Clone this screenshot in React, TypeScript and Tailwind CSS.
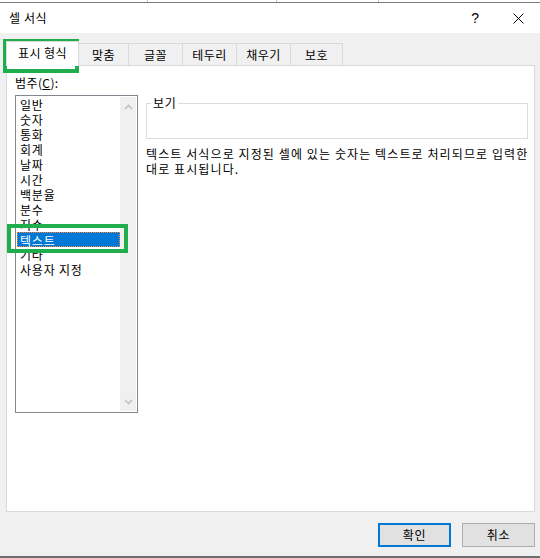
import React from "react";

const categories = [
  "일반",
  "숫자",
  "통화",
  "회계",
  "날짜",
  "시간",
  "백분율",
  "분수",
  "지수",
  "텍스트",
  "기타",
  "사용자 지정",
];

const tabs = ["맞춤", "글꼴", "테두리", "채우기", "보호"];

const Chevron = ({ up }: { up?: boolean }) => (
  <svg width="9" height="6" viewBox="0 0 9 6" className="block">
    <path
      d={up ? "M1 5 L4.5 1.5 L8 5" : "M1 1 L4.5 4.5 L8 1"}
      fill="none"
      stroke="#c2c2c2"
      strokeWidth="1.6"
    />
  </svg>
);

export default function App() {
  return (
    <div className="relative w-[540px] h-[558px] flex flex-col bg-[#f0f0f0] text-[12px] text-black font-['Noto_Sans_CJK_KR','Malgun_Gothic',sans-serif] overflow-hidden">
      {/* sheet behind the dialog */}
      <div className="h-[3px] bg-white border-b border-[#7a7a7a] flex">
        <div className="w-[148px] border-r border-[#c6c6c6]" />
        <div className="w-[129px] border-r border-[#c6c6c6]" />
        <div className="w-[102px] border-r border-[#c6c6c6]" />
      </div>

      {/* title bar */}
      <div className="h-[30px] bg-white flex items-center pl-[9px] pr-[16px]">
        <span className="text-[12px] leading-none tracking-[0.6px]">셀 서식</span>
        <span className="ml-auto text-[14px] leading-none font-['Liberation_Sans',sans-serif]">?</span>
        <svg width="11" height="11" viewBox="0 0 11 11" className="ml-[34px]">
          <path d="M0.5 0.5 L10.5 10.5 M10.5 0.5 L0.5 10.5" stroke="#000" strokeWidth="1" />
        </svg>
      </div>

      {/* body */}
      <div className="flex-1 flex flex-col">
        {/* tabs */}
        <div className="mt-[8px] h-[24px] flex items-end pl-[6px] tracking-[0.4px]">
          <div className="relative z-10 -mb-px h-[25px] w-[73px] bg-white border border-b-0 border-[#d9d9d9] flex items-center justify-center pb-[2px]">
            표시 형식
          </div>
          {tabs.map((t, i) => (
            <div
              key={t}
              className={`h-[22px] -ml-px bg-[#f0f0f0] border border-b-0 border-[#d9d9d9] flex items-center justify-center ${
                i === 0 ? "w-[51px]" : i === 4 ? "w-[53px]" : "w-[55px]"
              }`}
            >
              {t}
            </div>
          ))}
        </div>

        {/* panel */}
        <div className="ml-[6px] w-[529px] h-[447px] bg-white border border-[#d9d9d9] flex pl-[8px] pt-[9px]">
          <div className="flex flex-col">
            <div className="h-[15px] leading-[15px] tracking-[0.4px]">
              범주(<span className="underline">C</span>):
            </div>
            <div className="mt-[5px] w-[123px] h-[318px] border border-[#828790] flex">
              <div className="flex-1 flex flex-col pt-px tracking-[0.8px]">
                {categories.map((c) => (
                  <div
                    key={c}
                    className={`h-[15px] leading-[15px] whitespace-nowrap ${
                      c === "텍스트"
                        ? "ml-px bg-[#0078d7] text-white border border-dotted border-[#ff8728] pl-[2px] leading-[13px]"
                        : "pl-[4px]"
                    }`}
                  >
                    {c}
                  </div>
                ))}
              </div>
              <div className="w-[16px] bg-[#f0f0f0] flex flex-col items-center justify-between pt-[7px] pb-[6px] my-px mr-px">
                <Chevron up />
                <Chevron />
              </div>
            </div>
          </div>

          <div className="ml-[8px] mt-[28px] flex flex-col">
            <div className="relative w-[382px] h-[36px] border border-[#dcdcdc]">
              <span className="absolute -top-[9px] left-[4px] px-[2px] bg-white leading-[15px] tracking-[0.6px]">
                보기
              </span>
            </div>
            <p className="mt-[7px] leading-[15px] whitespace-nowrap tracking-[1.1px]">
              텍스트 서식으로 지정된 셀에 있는 숫자는 텍스트로 처리되므로 입력한
              <br />
              대로 표시됩니다.
            </p>
          </div>
        </div>

        {/* buttons */}
        <div className="mt-[11px] flex justify-end gap-[11px] pr-[5px] tracking-[0.6px]">
          <button className="w-[73px] h-[24px] bg-[#e1e1e1] border-2 border-[#0078d7] flex items-center justify-center">
            확인
          </button>
          <button className="w-[73px] h-[24px] bg-[#e1e1e1] border border-[#adadad] flex items-center justify-center">
            취소
          </button>
        </div>
      </div>

      <div className="h-[2px] bg-[#6e6e6e]" />

      {/* green highlight annotations */}
      <div className="absolute left-[3px] top-[39px] w-[76px] h-[34px] border-[4px] border-[#1fae4b]" />
      <div className="absolute left-[7px] top-[224px] w-[121px] h-[29px] border-[4px] border-[#1fae4b]" />
    </div>
  );
}
